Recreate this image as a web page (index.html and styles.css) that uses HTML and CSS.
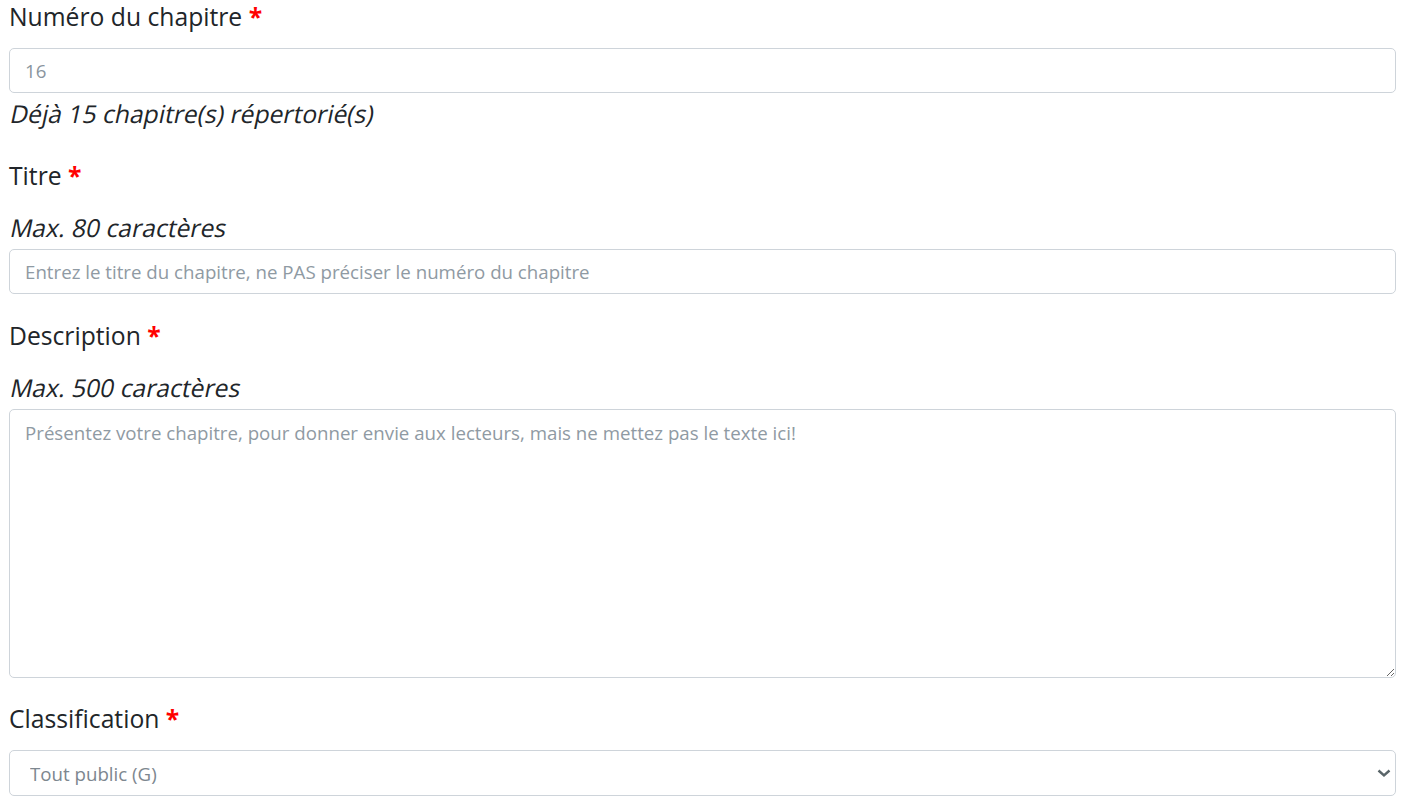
FILE: index.html
```html
<!DOCTYPE html>
<html lang="fr">
<head>
<meta charset="utf-8">
<title>Chapitre</title>
<link rel="stylesheet" href="styles.css">
</head>
<body>
<form class="form">
  <div class="group group-first">
    <label class="label" for="num">Numéro du chapitre <span class="req">*</span></label>
    <input class="control" id="num" type="text" value="16">
    <div class="help help-after"><span class="slant">Déjà 15 chapitre(s) répertorié(s)</span></div>
  </div>
  <div class="group group-second">
    <label class="label label-hint" for="titre">Titre <span class="req">*</span></label>
    <div class="help help-before"><span class="slant">Max. 80 caractères</span></div>
    <input class="control" id="titre" type="text" placeholder="Entrez le titre du chapitre, ne PAS préciser le numéro du chapitre">
  </div>
  <div class="group">
    <label class="label label-hint" for="desc">Description <span class="req">*</span></label>
    <div class="help help-before"><span class="slant">Max. 500 caractères</span></div>
    <textarea class="control area" id="desc" placeholder="Présentez votre chapitre, pour donner envie aux lecteurs, mais ne mettez pas le texte ici!"></textarea>
  </div>
  <div class="group">
    <label class="label" for="classif">Classification <span class="req">*</span></label>
    <select class="control select" id="classif">
      <option>Tout public (G)</option>
    </select>
  </div>
</form>
</body>
</html>
```
FILE: styles.css
```css
html, body {
  margin: 0;
  padding: 0;
  background: #fff;
}
body {
  font-family: "Open Sans", "Liberation Sans", sans-serif;
  color: #212529;
}
.form {
  padding: 0 10px 0 9px;
}
.group {
  margin-bottom: 24px;
}
.group-first {
  margin-bottom: 28px;
}
.group-second {
  margin-bottom: 25px;
}
.label {
  display: block;
  font-size: 24.7px;
  line-height: 34px;
  margin-bottom: 14px;
}
.label-hint {
  margin-bottom: 18px;
}
.req {
  color: #ff0000;
  font-weight: 700;
}
.help {
  font-size: 24.7px;
  line-height: 34px;
}
.slant {
  display: inline-block;
  transform: skewX(-12deg);
  transform-origin: 0 75%;
}
.help-after {
  margin-top: 4px;
}
.help-before {
  margin-bottom: 4px;
}
.control {
  display: block;
  box-sizing: border-box;
  width: 100%;
  height: 45px;
  margin: 0;
  padding: 0 15px;
  font-family: "Open Sans", "Liberation Sans", sans-serif;
  font-size: 18.7px;
  color: #8a959e;
  background: #fff;
  border: 1px solid #ced4da;
  border-radius: 5px;
  outline: none;
}
.control::placeholder {
  color: #8f9aa3;
  opacity: 1;
}
.area {
  height: 269px;
  padding: 10px 15px;
  line-height: 26px;
  resize: vertical;
}
.select {
  -webkit-appearance: none;
  appearance: none;
  height: 46px;
  padding: 0 40px 0 20px;
  color: #7d878f;
  background-image: url("data:image/svg+xml;utf8,<svg xmlns='http://www.w3.org/2000/svg' width='14' height='10' viewBox='0 0 14 10'><path d='M1.5 2.5 L7 7.5 L12.5 2.5' fill='none' stroke='%235a6569' stroke-width='2.4'/></svg>");
  background-repeat: no-repeat;
  background-position: right 4px center;
  background-size: 14px 10px;
}
```
